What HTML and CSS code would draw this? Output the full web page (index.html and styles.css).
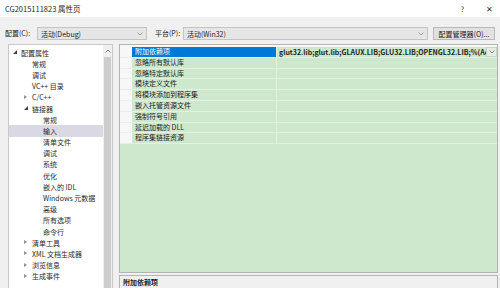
FILE: index.html
```html
<!DOCTYPE html>
<html lang="zh-CN">
<head>
  <meta charset="UTF-8" />
  <title>CG2015111823 属性页</title>
  <link rel="stylesheet" href="styles.css">
</head>
<body>
<div class="window">
  <div class="titlebar">
    <span class="title">CG2015111823 属性页</span>
    <span class="tb-btn help">?</span>
    <span class="tb-btn close">✕</span>
  </div>

  <div class="toolbar">
    <label class="tool-label">配置(C):</label>
    <div class="combo combo-config">
      <span>活动(Debug)</span>
      <svg class="chev" width="6" height="4" viewBox="0 0 6 4"><path d="M0.5 0.5 L3 3 L5.5 0.5" fill="none" stroke="#8a8a8a" stroke-width="0.8"/></svg>
    </div>
    <label class="tool-label platform">平台(P):</label>
    <div class="combo combo-platform">
      <span>活动(Win32)</span>
      <svg class="chev" width="6" height="4" viewBox="0 0 6 4"><path d="M0.5 0.5 L3 3 L5.5 0.5" fill="none" stroke="#8a8a8a" stroke-width="0.8"/></svg>
    </div>
    <button class="cfg-btn">配置管理器(O)...</button>
  </div>

  <div class="main">
    <div class="tree-panel">
      <ul class="tree">
        <li class="lvl0"><span class="twisty open"></span>配置属性</li>
        <li class="lvl1"><span class="twisty"></span>常规</li>
        <li class="lvl1"><span class="twisty"></span>调试</li>
        <li class="lvl1"><span class="twisty"></span>VC++ 目录</li>
        <li class="lvl1"><span class="twisty closed"></span>C/C++</li>
        <li class="lvl1"><span class="twisty open"></span>链接器</li>
        <li class="lvl2"><span class="twisty"></span>常规</li>
        <li class="lvl2 selected"><span class="twisty"></span>输入</li>
        <li class="lvl2"><span class="twisty"></span>清单文件</li>
        <li class="lvl2"><span class="twisty"></span>调试</li>
        <li class="lvl2"><span class="twisty"></span>系统</li>
        <li class="lvl2"><span class="twisty"></span>优化</li>
        <li class="lvl2"><span class="twisty"></span>嵌入的 IDL</li>
        <li class="lvl2"><span class="twisty"></span>Windows 元数据</li>
        <li class="lvl2"><span class="twisty"></span>高级</li>
        <li class="lvl2"><span class="twisty"></span>所有选项</li>
        <li class="lvl2"><span class="twisty"></span>命令行</li>
        <li class="lvl1"><span class="twisty closed"></span>清单工具</li>
        <li class="lvl1"><span class="twisty closed"></span>XML 文档生成器</li>
        <li class="lvl1"><span class="twisty closed"></span>浏览信息</li>
        <li class="lvl1"><span class="twisty closed"></span>生成事件</li>
      </ul>
      <div class="scrollbar">
        <div class="scroll-up">
          <svg width="6" height="4" viewBox="0 0 6 4"><path d="M0.5 3.5 L3 1 L5.5 3.5" fill="none" stroke="#606060" stroke-width="0.8"/></svg>
        </div>
        <div class="scroll-thumb"></div>
      </div>
    </div>

    <div class="right">
      <div class="grid">
        <div class="grid-top"></div>
        <div class="row active">
          <div class="gutter"></div>
          <div class="name">附加依赖项</div>
          <div class="value">
            <span class="value-text">glut32.lib;glut.lib;GLAUX.LIB;GLU32.LIB;OPENGL32.LIB;%(Ad</span>
            <span class="drop">
              <svg width="6" height="4" viewBox="0 0 6 4"><path d="M0.5 0.5 L3 3 L5.5 0.5" fill="none" stroke="#707070" stroke-width="0.8"/></svg>
            </span>
          </div>
        </div>
        <div class="row"><div class="gutter"></div><div class="name">忽略所有默认库</div><div class="value"></div></div>
        <div class="row"><div class="gutter"></div><div class="name">忽略特定默认库</div><div class="value"></div></div>
        <div class="row"><div class="gutter"></div><div class="name">模块定义文件</div><div class="value"></div></div>
        <div class="row"><div class="gutter"></div><div class="name">将模块添加到程序集</div><div class="value"></div></div>
        <div class="row"><div class="gutter"></div><div class="name">嵌入托管资源文件</div><div class="value"></div></div>
        <div class="row"><div class="gutter"></div><div class="name">强制符号引用</div><div class="value"></div></div>
        <div class="row"><div class="gutter"></div><div class="name">延迟加载的 DLL</div><div class="value"></div></div>
        <div class="row"><div class="gutter"></div><div class="name">程序集链接资源</div><div class="value"></div></div>
      </div>
      <div class="desc">
        <div class="desc-title">附加依赖项</div>
      </div>
    </div>
  </div>
</div>
</body>
</html>
```

FILE: styles.css
```css
* {
  box-sizing: border-box;
}

body {
  margin: 0;
  background: #f0f0f0;
  font-family: "Noto Sans CJK SC", "Noto Sans", sans-serif;
  font-size: 7px;
  color: #1e1e1e;
}

.window {
  width: 500px;
  height: 288px;
  overflow: hidden;
  display: flex;
  flex-direction: column;
}

.titlebar {
  height: 17px;
  background: #ffffff;
  display: flex;
  align-items: center;
  padding-left: 5px;
}

.title {
  font-size: 7.5px;
  flex: 1;
}

.tb-btn {
  color: #333;
  font-size: 7px;
}

.help {
  margin-right: 22px;
}

.close {
  margin-right: 7px;
  font-size: 8px;
}

.toolbar {
  height: 27px;
  display: flex;
  align-items: flex-end;
  padding: 0 5px 4px 5px;
}

.tool-label {
  height: 13px;
  line-height: 13px;
  width: 32px;
}

.tool-label.platform {
  width: 28px;
  margin-left: 8px;
}

.combo {
  height: 13px;
  background: #e6e6e6;
  border: 1px solid #c4c4c4;
  display: flex;
  align-items: center;
  justify-content: space-between;
  padding: 0 3px 0 3px;
}

.combo-config {
  width: 110px;
}

.combo-platform {
  width: 245px;
}

.cfg-btn {
  height: 13px;
  width: 62px;
  margin-left: 5px;
  padding: 0;
  border: 1px solid #b8b8b8;
  background: #e1e1e1;
  font-family: inherit;
  font-size: 7px;
  color: #1e1e1e;
}

.main {
  flex: 1;
  display: flex;
  padding-left: 8px;
  gap: 6px;
  min-height: 0;
}

.tree-panel {
  width: 105px;
  background: #ffffff;
  border: 1px solid #c8c8c8;
  border-bottom: none;
  display: flex;
  overflow: hidden;
}

.tree {
  list-style: none;
  margin: 0;
  padding: 2px 0 0 0;
  flex: 1;
  color: #2a2a2a;
}

.tree li {
  height: 11.2px;
  display: flex;
  align-items: center;
  white-space: nowrap;
}

.tree .lvl0 { padding-left: 3px; }
.tree .lvl1 { padding-left: 14px; }
.tree .lvl2 { padding-left: 25px; }

.tree li.selected {
  background: #d9d9e6;
}

.twisty {
  width: 9px;
  height: 5px;
  flex: none;
  position: relative;
}

.twisty.open::before {
  content: "";
  position: absolute;
  left: 1px;
  top: 0;
  border-style: solid;
  border-width: 0 0 4px 4px;
  border-color: transparent transparent #404040 transparent;
}

.twisty.closed::before {
  content: "";
  position: absolute;
  left: 1px;
  top: 0;
  width: 0;
  height: 0;
  border-top: 2.5px solid transparent;
  border-bottom: 2.5px solid transparent;
  border-left: 3px solid #909090;
}

.scrollbar {
  width: 9px;
  flex: none;
  background: #f0f0f0;
  display: flex;
  flex-direction: column;
}

.scroll-up {
  height: 12px;
  display: flex;
  align-items: center;
  justify-content: center;
}

.scroll-thumb {
  flex: 1;
  margin: 0 1px;
  background: #cdcdcd;
}

.right {
  width: 379px;
  display: flex;
  flex-direction: column;
  gap: 2px;
}

.grid {
  flex: 1;
  background: #cde8cd;
  border: 1px solid #b4b4b4;
}

.grid-top {
  height: 2px;
  background: #f7f7f7;
}

.row {
  height: 10.8px;
  display: flex;
  border-bottom: 1px solid #e2f1e2;
}

.gutter {
  width: 12px;
  background: #f7f7f7;
}

.name {
  width: 145px;
  padding-left: 3px;
  line-height: 9.8px;
  border-right: 1px solid #e2f1e2;
  white-space: nowrap;
}

.row.active .name {
  background: #0078d7;
  color: #ffffff;
}

.value {
  flex: 1;
  display: flex;
  align-items: center;
  padding-left: 2px;
  overflow: hidden;
}

.value-text {
  flex: 1;
  font-weight: bold;
  white-space: nowrap;
  overflow: hidden;
}

.drop {
  width: 11px;
  height: 10px;
  background: #e4efe4;
  border: 1px solid #c9d6c9;
  display: flex;
  align-items: center;
  justify-content: center;
}

.desc {
  height: 13px;
  border: 1px solid #b4b4b4;
  border-bottom: none;
  padding-left: 3px;
}

.desc-title {
  font-weight: bold;
  line-height: 12px;
}
```
